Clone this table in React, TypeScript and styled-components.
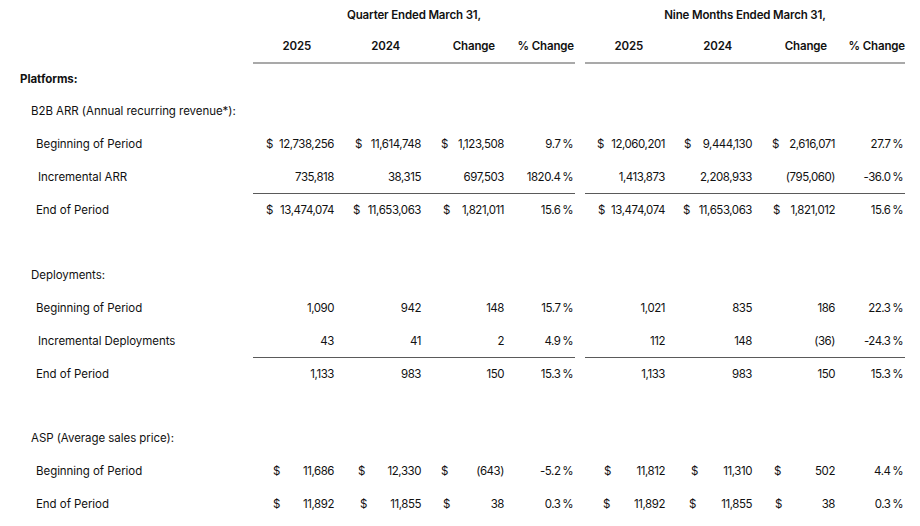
import styled, { createGlobalStyle } from "styled-components";

const GlobalStyle = createGlobalStyle`
  * { box-sizing: border-box; }
  body {
    margin: 0;
    background: #ffffff;
    color: #111111;
    font-family: Inter, "Liberation Sans", sans-serif;
    font-size: 11.5px;
  }
`;

// column widths inside each group, and where header text ends
const LEFT_COLS = "81px 87px 83px 71px";
const RIGHT_COLS = "80px 87px 83px 70px";
const HEAD_PAD = [23, 21, 9, 1, 22, 20, 8, 0];

const ARR_D = [13, 21, 20, null, 12, 19, 20, null];
const ASP_D = [20, 24, 20, null, 19, 26, 22, null];

const pct = (n: string) => `${n}\u2009%`;

type Line =
  | { kind: "section"; label: string; indent: number; bold?: boolean }
  | { kind: "spacer"; height: number }
  | {
      kind: "item";
      label: string;
      indent: number;
      values: string[];
      dollars?: (number | null)[];
      total?: boolean;
    };

const lines: Line[] = [
  { kind: "section", label: "Platforms:", indent: 20, bold: true },
  { kind: "section", label: "B2B ARR (Annual recurring revenue*):", indent: 31 },
  {
    kind: "item",
    label: "Beginning of Period",
    indent: 36,
    values: ["12,738,256", "11,614,748", "1,123,508", pct("9.7"), "12,060,201", "9,444,130", "2,616,071", pct("27.7")],
    dollars: ARR_D,
  },
  {
    kind: "item",
    label: "Incremental ARR",
    indent: 38,
    values: ["735,818", "38,315", "697,503", pct("1820.4"), "1,413,873", "2,208,933", "(795,060)", pct("-36.0")],
  },
  {
    kind: "item",
    label: "End of Period",
    indent: 36,
    values: ["13,474,074", "11,653,063", "1,821,011", pct("15.6"), "13,474,074", "11,653,063", "1,821,012", pct("15.6")],
    dollars: [13, 19, 22, null, 13, 18, 21, null],
    total: true,
  },
  { kind: "spacer", height: 32 },
  { kind: "section", label: "Deployments:", indent: 31 },
  {
    kind: "item",
    label: "Beginning of Period",
    indent: 36,
    values: ["1,090", "942", "148", pct("15.7"), "1,021", "835", "186", pct("22.3")],
  },
  {
    kind: "item",
    label: "Incremental Deployments",
    indent: 38,
    values: ["43", "41", "2", pct("4.9"), "112", "148", "(36)", pct("-24.3")],
  },
  {
    kind: "item",
    label: "End of Period",
    indent: 36,
    values: ["1,133", "983", "150", pct("15.3"), "1,133", "983", "150", pct("15.3")],
    total: true,
  },
  { kind: "spacer", height: 31 },
  { kind: "section", label: "ASP (Average sales price):", indent: 31 },
  {
    kind: "item",
    label: "Beginning of Period",
    indent: 36,
    values: ["11,686", "12,330", "(643)", pct("-5.2"), "11,812", "11,310", "502", pct("4.4")],
    dollars: ASP_D,
  },
  {
    kind: "item",
    label: "End of Period",
    indent: 36,
    values: ["11,892", "11,855", "38", pct("0.3"), "11,892", "11,855", "38", pct("0.3")],
    dollars: [20, 26, 22, null, 18, 24, 23, null],
  },
];

export default function App() {
  return (
    <>
      <GlobalStyle />
      <Table>
        <TitleRow>
          <span />
          <GroupTitle>Quarter Ended March 31,</GroupTitle>
          <span />
          <GroupTitle>Nine Months Ended March 31,</GroupTitle>
        </TitleRow>
        <HeadRow>
          <span />
          <Group $cols={LEFT_COLS} $rule="head">
            {["2025", "2024", "Change", "% Change"].map((h, i) => (
              <HeadCell key={h} $pad={HEAD_PAD[i]}>
                {h}
              </HeadCell>
            ))}
          </Group>
          <span />
          <Group $cols={RIGHT_COLS} $rule="head">
            {["2025", "2024", "Change", "% Change"].map((h, i) => (
              <HeadCell key={h} $pad={HEAD_PAD[i + 4]}>
                {h}
              </HeadCell>
            ))}
          </Group>
        </HeadRow>
        {lines.map((line, i) => {
          if (line.kind === "spacer") return <Spacer key={i} $h={line.height} />;
          if (line.kind === "section")
            return (
              <SectionRow key={i} $first={i === 0}>
                <Label $indent={line.indent} $bold={line.bold}>
                  {line.label}
                </Label>
              </SectionRow>
            );
          const left = line.values.slice(0, 4);
          const right = line.values.slice(4);
          const renderCells = (vals: string[], offset: number) =>
            vals.map((v, j) => {
              const d = line.dollars ? line.dollars[j + offset] : null;
              const last = j === 3;
              return (
                <ValueCell key={j} $dollar={d} $last={last}>
                  {d != null ? <span>$</span> : <span />}
                  <span>{v}</span>
                </ValueCell>
              );
            });
          return (
            <Row key={i}>
              <Label $indent={line.indent}>{line.label}</Label>
              <Group $cols={LEFT_COLS} $rule={line.total ? "total" : "none"}>
                {renderCells(left, 0)}
              </Group>
              <span />
              <Group $cols={RIGHT_COLS} $rule={line.total ? "total" : "none"}>
                {renderCells(right, 4)}
              </Group>
            </Row>
          );
        })}
      </Table>
    </>
  );
}

const Table = styled.div`
  width: 920px;
  padding-top: 1px;
  display: flex;
  flex-direction: column;
`;

const Grid = styled.div`
  display: grid;
  grid-template-columns: 253px 322px 10px 320px;
`;

const TitleRow = styled(Grid)`
  height: 28px;
  align-items: center;
`;

const GroupTitle = styled.div`
  text-align: center;
  font-weight: 600;
  letter-spacing: -0.15px;
`;

const HeadRow = styled(Grid)`
  height: 35px;
`;

const Group = styled.div<{ $cols: string; $rule: "head" | "total" | "none" }>`
  display: grid;
  grid-template-columns: ${(p) => p.$cols};
  align-items: center;
  border-top: ${(p) => (p.$rule === "total" ? "1px solid #5a5a5a" : "none")};
  border-bottom: ${(p) => (p.$rule === "head" ? "2px solid #a9a9a9" : "none")};
`;

const HeadCell = styled.div<{ $pad: number }>`
  text-align: right;
  padding-right: ${(p) => p.$pad}px;
  font-weight: 600;
  letter-spacing: -0.15px;
`;

const SectionRow = styled.div<{ $first?: boolean }>`
  height: ${(p) => (p.$first ? 30 : 33)}px;
  display: flex;
  align-items: center;
  padding-bottom: ${(p) => (p.$first ? 1 : 0)}px;
`;

const Row = styled(Grid)`
  height: 33px;
  align-items: stretch;
`;

const Label = styled.div<{ $indent: number; $bold?: boolean }>`
  display: flex;
  align-items: center;
  padding-left: ${(p) => p.$indent}px;
  font-weight: ${(p) => (p.$bold ? 700 : 400)};
  letter-spacing: -0.05px;
`;

const ValueCell = styled.div<{ $dollar: number | null | undefined; $last: boolean }>`
  display: flex;
  justify-content: space-between;
  align-items: center;
  padding-left: ${(p) => p.$dollar ?? 0}px;
  padding-right: ${(p) => (p.$last ? 2 : 0)}px;
  letter-spacing: -0.45px;
  white-space: nowrap;
`;

const Spacer = styled.div<{ $h: number }>`
  height: ${(p) => p.$h}px;
`;
